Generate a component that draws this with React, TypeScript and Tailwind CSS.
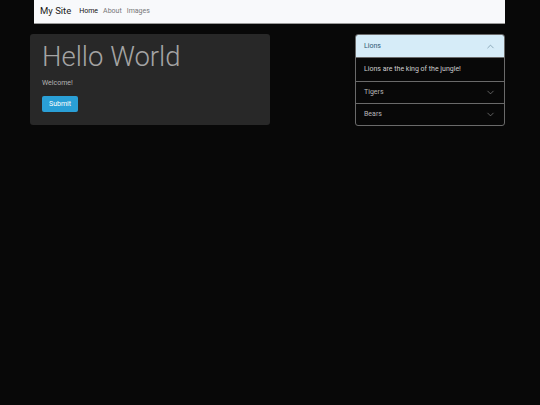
import { ChevronDown, ChevronUp } from 'lucide-react';
import clsx from 'clsx';

type Panel = { title: string; body?: string };

const navLinks = [
  { label: 'Home', active: true },
  { label: 'About', active: false },
  { label: 'Images', active: false },
];

const panels: Panel[] = [
  { title: 'Lions', body: 'Lions are the king of the jungle!' },
  { title: 'Tigers' },
  { title: 'Bears' },
];

function Navbar(): JSX.Element {
  return (
    <nav className="ml-[34px] flex h-[24px] w-[471px] items-center border-b border-[#9a9a9a] bg-[#f8f9fb] pl-[6px]">
      <span className="mr-[8px] text-[9.5px] text-[#1c1c1c]">My Site</span>
      <div className="flex gap-[5px] text-[7px]">
        {navLinks.map(link => (
          <span className={clsx(link.active ? 'text-[#111]' : 'text-[#777]')} key={link.label}>
            {link.label}
          </span>
        ))}
      </div>
    </nav>
  );
}

function Accordion(): JSX.Element {
  return (
    <div className="w-[150px] overflow-hidden rounded-[3px] border border-[#6a6a6a]">
      {panels.map((panel, index) => {
        const open = index === 0;
        return (
          <div className={clsx(index !== 0 && 'border-t border-[#6a6a6a]')} key={panel.title}>
            <div
              className={clsx(
                'flex items-center justify-between px-[8px] text-[7px]',
                open ? 'h-[22px] bg-[#d6ecf8] text-[#2e5a73]' : 'h-[21px] text-[#b8b8b8]',
              )}
            >
              <span>{panel.title}</span>
              {open ? (
                <ChevronUp size={11} strokeWidth={1.3} className="text-[#5c7e92]" />
              ) : (
                <ChevronDown size={11} strokeWidth={1.3} className="text-[#9a9a9a]" />
              )}
            </div>
            {open && panel.body && (
              <div className="flex h-[24px] items-center border-t border-[#6a6a6a] px-[8px] text-[7px] text-[#cfcfcf]">
                {panel.body}
              </div>
            )}
          </div>
        );
      })}
    </div>
  );
}

export default function App(): JSX.Element {
  return (
    <div className="h-[405px] w-[540px] bg-[#080808] font-['Roboto',sans-serif]">
      <Navbar />
      <main className="mt-[10px] flex items-start pl-[30px] pr-[35px]">
        <section className="h-[91px] w-[240px] rounded-[3px] bg-[#282828] px-[12px] pt-[6px]">
          <h1 className="text-[27.5px] leading-[34px] font-light text-[#a4a4a4]">Hello World</h1>
          <p className="mt-[4px] text-[7px] text-[#b4b4b4]">Welcome!</p>
          <button className="mt-[7px] h-[16px] rounded-[2px] bg-[#2a9fd6] px-[7px] text-[7px] text-white">
            Submit
          </button>
        </section>
        <div className="ml-auto">
          <Accordion />
        </div>
      </main>
    </div>
  );
}
